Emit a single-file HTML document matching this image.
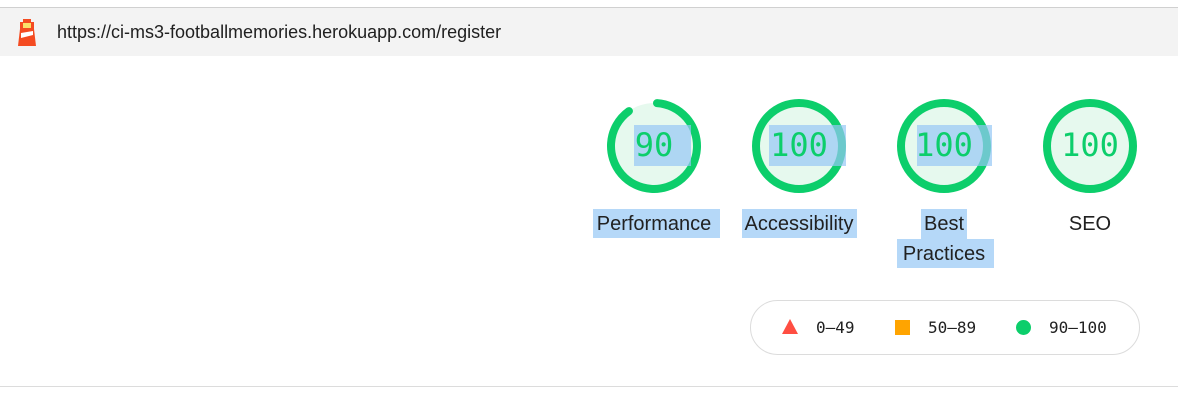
<!DOCTYPE html><html><head><style>
body{margin:0;width:1178px;height:401px;background:#fff;position:relative;overflow:hidden;font-family:"Liberation Sans",sans-serif}
.a{position:absolute}
.hl{position:absolute;background:rgba(150,200,245,0.7)}
.num{position:absolute;font-family:"DejaVu Sans Mono",monospace;font-size:32px;color:#0cce6b;width:146px;text-align:center;top:126px;line-height:38px}
.lbl{position:absolute;font-size:20px;color:#212121;width:146px;text-align:center;line-height:30px;top:209px}
.lg{position:absolute;font-family:"DejaVu Sans Mono",monospace;font-size:16px;color:#212121;top:318px}
</style></head><body>
<div class="a" style="left:0;top:7px;width:1178px;height:1px;background:#d0d0d0"></div>
<div class="a" style="left:0;top:8px;width:1178px;height:48px;background:#f3f3f3"></div>
<svg class="a" style="left:16px;top:19px" width="22" height="27" viewBox="0 0 22 27">
<rect x="7" y="0" width="8" height="3" fill="#f44b21"/><rect x="4" y="3" width="14" height="7" fill="#f44b21"/><rect x="7" y="4" width="8" height="5" fill="#fbe06a"/><polygon points="4,10 18,10 20,27 2,27" fill="#f44b21"/><polygon points="5,14 17,12 17,16 5,19" fill="#fff"/></svg>
<div class="a" style="left:57px;top:22px;font-size:18px;color:#202020">https://ci-ms3-footballmemories.herokuapp.com/register</div>
<svg class="a" style="left:0;top:0" width="1178" height="401">
<g fill="#e6f9ee" stroke="#0cce6b" stroke-width="8" stroke-linecap="round">
<circle cx="654" cy="146" r="43" stroke="none"/>
<circle cx="654" cy="146" r="43" fill="none" stroke-dasharray="240 270" transform="rotate(-86 654 146)"/>
<circle cx="799" cy="146" r="43"/>
<circle cx="944" cy="146" r="43"/>
<circle cx="1090" cy="146" r="43"/>
</g></svg>
<div class="hl" style="left:634px;top:125px;width:57px;height:41px"></div>
<div class="hl" style="left:769px;top:125px;width:77px;height:41px"></div>
<div class="hl" style="left:917px;top:125px;width:75px;height:41px"></div>
<div class="hl" style="left:593px;top:209px;width:127px;height:29px"></div>
<div class="hl" style="left:742px;top:209px;width:115px;height:29px"></div>
<div class="hl" style="left:921px;top:209px;width:46px;height:30px"></div>
<div class="hl" style="left:897px;top:239px;width:97px;height:29px"></div>
<div class="num" style="left:581px">90</div>
<div class="num" style="left:726px">100</div>
<div class="num" style="left:871px">100</div>
<div class="num" style="left:1017px">100</div>
<div class="lbl" style="left:581px">Performance</div>
<div class="lbl" style="left:726px">Accessibility</div>
<div class="lbl" style="left:871px">Best<br>Practices</div>
<div class="lbl" style="left:1017px">SEO</div>
<div class="a" style="left:750px;top:300px;width:390px;height:55px;border:1px solid #dcdcdc;border-radius:28px;box-sizing:border-box"></div>
<svg class="a" style="left:782px;top:319px" width="16" height="15"><polygon points="8,0 16,15 0,15" fill="#ff4e42"/></svg>
<div class="lg" style="left:816px">0–49</div>
<div class="a" style="left:895px;top:320px;width:15px;height:15px;background:#ffa400"></div>
<div class="lg" style="left:928px">50–89</div>
<div class="a" style="left:1016px;top:320px;width:15px;height:15px;border-radius:50%;background:#0cce6b"></div>
<div class="lg" style="left:1049px">90–100</div>
<div class="a" style="left:0;top:386px;width:1178px;height:1px;background:#dcdcdc"></div>
</body></html>
